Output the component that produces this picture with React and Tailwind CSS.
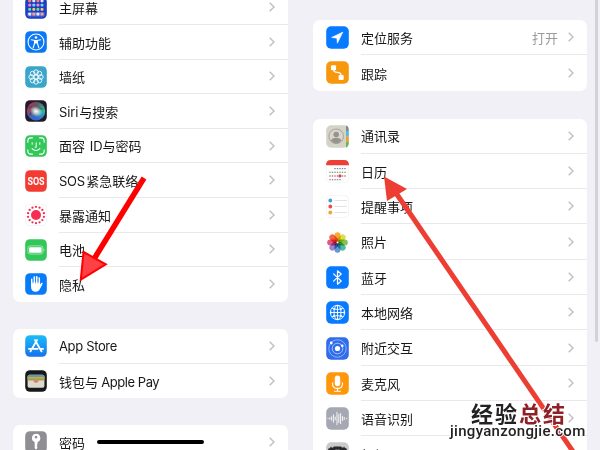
import React from "react";

const Chevron = () => (
  <svg viewBox="0 0 6 10" className="h-[10px] w-[6px] shrink-0" fill="none" stroke="#bfbfc2" strokeWidth="1.4">
    <path d="M.7.7 5 5 .7 9.3" />
  </svg>
);

const Tile = ({ fill, children, stroke }) => (
  <>
    <rect x=".2" y=".2" width="22.6" height="22.6" rx="5" fill={fill} stroke={stroke} strokeWidth=".6" />
    {children}
  </>
);

const range = (n) => Array.from({ length: n }, (_, i) => i);
const polar = (r, deg) => [11.5 + r * Math.cos((deg * Math.PI) / 180), 11.5 + r * Math.sin((deg * Math.PI) / 180)];

const icons = {
  home: (
    <Tile fill="#1d3fc4">
      {range(4).flatMap((r) =>
        range(4).map((c) => (
          <rect key={`${r}${c}`} x={3.4 + c * 4.3} y={2.6 + r * 4.4 + (r === 3 ? 0.6 : 0)} width="3" height="3" rx=".8"
            fill={["#ff7b6b", "#f6c760", "#7ed0f5", "#e8e4ff", "#69df96", "#f588b5"][(r * 5 + c * 3) % 6]} />
        ))
      )}
      <rect x="2.5" y="15.6" width="18" height="4.8" rx="1.5" fill="#fff" opacity=".25" />
    </Tile>
  ),
  access: (
    <Tile fill="#0a78f5">
      <circle cx="11.5" cy="11.5" r="8.3" fill="none" stroke="#fff" strokeWidth="1.1" />
      <circle cx="11.5" cy="6.8" r="1.4" fill="#fff" />
      <path d="M6.7 9.2 10 9.9v3L8.5 17.6M16.3 9.2 13 9.9v3l1.5 4.7" fill="none" stroke="#fff" strokeWidth="1.2" strokeLinecap="round" />
      <path d="M9.8 9.3h3.4v4.3l-1.7-.8-1.7.8z" fill="#fff" />
    </Tile>
  ),
  wallpaper: (
    <Tile fill="#3aa5cb">
      <g fill="none" stroke="#fff" strokeWidth=".9">
        {range(8).map((i) => {
          const [x, y] = polar(5, i * 45);
          return <circle key={i} cx={x} cy={y} r="2.5" />;
        })}
        <circle cx="11.5" cy="11.5" r="2.1" />
      </g>
    </Tile>
  ),
  siri: (
    <>
      <defs>
        <linearGradient id="siri" x1="0" x2="1" y2=".5"><stop stopColor="#d22b68" /><stop offset=".48" stopColor="#66535f" /><stop offset="1" stopColor="#1fc7a4" /></linearGradient>
        <linearGradient id="siriLow" x2="0" y2="1"><stop offset=".5" stopColor="#3178e8" stopOpacity="0" /><stop offset="1" stopColor="#315eea" /></linearGradient>
        <radialGradient id="siriGlow"><stop stopColor="#fff" /><stop offset=".35" stopColor="#fff" stopOpacity=".7" /><stop offset="1" stopColor="#fff" stopOpacity="0" /></radialGradient>
      </defs>
      <Tile fill="#231a29">
        <circle cx="11.5" cy="11.5" r="9.6" fill="url(#siri)" />
        <circle cx="11.5" cy="11.5" r="9.6" fill="url(#siriLow)" />
        <path d="M3 8Q9 3 20 10 10 9 4 17 8 8 3 8" fill="#101820" opacity=".3" />
        <ellipse cx="11.5" cy="11.7" rx="7.2" ry="5.5" fill="url(#siriGlow)" transform="rotate(25 11.5 11.5)" />
      </Tile>
    </>
  ),
  face: (
    <Tile fill="#32c759">
      <g fill="none" stroke="#fff" strokeWidth="1.1" strokeLinecap="round">
        <path d="M3 7.5V6q0-3 3-3h1.8M15.2 3H17q3 0 3 3v1.5M20 15.5V17q0 3-3 3h-1.8M7.8 20H6q-3 0-3-3v-1.5M7.5 8v1.7M15.5 8v1.7M11.7 8v4.2q0 .7-1 .7M7.4 14.3q4.1 3.7 8.2 0" />
      </g>
    </Tile>
  ),
  sos: (
    <Tile fill="#f43b33">
      <text x="11.5" y="15.3" textAnchor="middle" textLength="18" lengthAdjust="spacingAndGlyphs" fill="#fff" fontFamily="Roboto, sans-serif" fontSize="10.5" fontWeight="700">SOS</text>
    </Tile>
  ),
  exposure: (
    <Tile fill="#fff" stroke="#e8e8eb">
      <circle cx="11.5" cy="11.5" r="5.2" fill="#f72e54" />
      {range(14).map((i) => {
        const [x, y] = polar(8.5, (i * 360) / 14 - 90);
        return <circle key={i} cx={x} cy={y} r="1.2" fill="#f72e54" />;
      })}
    </Tile>
  ),
  battery: (
    <Tile fill="#32c759">
      <rect x="3" y="7.2" width="15.7" height="8.5" rx="2.3" fill="none" stroke="#b9efc7" strokeWidth=".8" />
      <rect x="4.3" y="8.5" width="13.1" height="5.9" rx="1" fill="#fff" />
      <path d="M19.6 9.8q1.5 1.7 0 3.4z" fill="#fff" />
    </Tile>
  ),
  hand: (
    <Tile fill="#087bf9">
      <path d="M7.1 12V6.5M9.7 11V4.3M12.3 11V3.9M14.9 11.5V5.3M14.9 15l2.7-4" stroke="#fff" strokeWidth="1.7" strokeLinecap="round" fill="none" />
      <path d="M6.3 9.8h9.4v3.6l1.4-2 .9.6-2.8 5.4q-1.3 2.2-3.8 2.2-5.1 0-5.1-5.6z" fill="#fff" />
      <path d="M8.4 6v5M11 6v5M13.6 6v5" stroke="#087bf9" strokeWidth=".5" />
    </Tile>
  ),
  store: (
    <>
      <defs><linearGradient id="store" x2="0" y2="1"><stop stopColor="#1bbdf8" /><stop offset="1" stopColor="#1671ef" /></linearGradient></defs>
      <Tile fill="url(#store)">
        <path d="M12.6 5.2 7.3 14.4M10.4 5.2l6.9 12M4 14.4h9.3M16 14.4h3M5.7 17.2l.6-1" fill="none" stroke="#fff" strokeWidth="1.8" strokeLinecap="round" />
      </Tile>
    </>
  ),
  wallet: (
    <Tile fill="#161919">
      <rect x="2.7" y="5" width="17.6" height="13.5" rx="1.8" fill="#ded9cf" />
      <path d="M2.7 7q0-2 2-2h13.6q2 0 2 2v.3H2.7z" fill="#609caf" />
      <path d="M2.7 7.3h17.6v2H2.7z" fill="#dba43c" />
      <path d="M2.7 9h17.6v2H2.7z" fill="#98a352" />
      <path d="M8.4 11h6.2q-1 2.4-3.1 2.4T8.4 11" fill="#e6705c" />
    </Tile>
  ),
  key: (
    <Tile fill="#8e8e93">
      <path fillRule="evenodd" d="M11.5 3a4.4 4.4 0 0 1 1.7 8.5v2l-1 1 1 1-1 1 1 1-1.7 2-1.4-1.7v-6.3A4.4 4.4 0 0 1 11.5 3m0 2a1.4 1.4 0 1 0 .01 0" fill="#fff" />
    </Tile>
  ),
  location: <Tile fill="#087aff"><path d="M16.9 6.1 5.6 11.4l5.3.8.5 5z" fill="#fff" stroke="#fff" strokeWidth=".6" strokeLinejoin="round" /></Tile>,
  track: (
    <Tile fill="#f7970b">
      <rect x="5" y="4.2" width="5.1" height="5.1" rx="1" fill="#fff" />
      <rect x="12.6" y="14" width="5.1" height="5.1" rx="1" fill="#fff" />
      <path d="M7.6 8.5q0 2.7 3.7 2.9t3.9 3" fill="none" stroke="#fff" strokeWidth="1.2" />
    </Tile>
  ),
  contacts: (
    <Tile fill="#d5d2c7">
      <path d="M20 .4q2.7.5 2.7 4V6H20z" fill="#898985" />
      <path d="M20 6h2.8v5.5H20z" fill="#56bae8" />
      <path d="M20 11.5h2.8V17H20z" fill="#f0a032" />
      <path d="M20 17h2.8q.2 4.5-2.8 5.7z" fill="#61bd59" />
      <circle cx="10.2" cy="11.3" r="7.3" fill="#d9d6cc" stroke="#97958e" strokeWidth=".8" />
      <circle cx="10.2" cy="9.5" r="2.8" fill="#96948e" />
      <path d="M4.9 15.6q1.3-2.8 5.3-2.8t5.3 2.8q-5.3 5.4-10.6 0" fill="#96948e" />
    </Tile>
  ),
  calendar: (
    <Tile fill="#fff" stroke="#ececef">
      <path d="M0 5.2Q0 0 5 0h13q5 0 5 5.2z" fill="#ee3e38" />
      {range(4).flatMap((r) => range(7).map((c) => (r === 0 && c < 2) || (r === 3 && c > 4) ? null : (
        <rect key={`${r}${c}`} x={3.3 + c * 2.5} y={8 + r * 3.7} width="1.4" height="1.2" fill={r === 2 ? "#c94e58" : r === 1 ? "#6b9c70" : "#7d8395"} />
      )))}
      <circle cx="13.9" cy="15.9" r="1.6" fill="#e34255" />
    </Tile>
  ),
  reminders: (
    <Tile fill="#fff" stroke="#e9e9ec">
      <circle cx="4.3" cy="5.5" r="1.9" fill="#409fce" /><circle cx="4.3" cy="11.5" r="1.9" fill="#e84d4d" /><circle cx="4.3" cy="17.5" r="1.9" fill="#eba63a" />
      <path d="M8.5 5.5H21M8.5 11.5H21M8.5 17.5H21" stroke="#d7d7da" strokeWidth=".7" />
    </Tile>
  ),
  photos: (
    <g>
      {["#f8a51c", "#dadd36", "#78be4a", "#42b39b", "#4b93d5", "#9a78c2", "#df477d", "#f05b37"].map((color, i) => (
        <rect key={color} x="8.5" y="1.2" width="6" height="9.8" rx="3" fill={color} className="mix-blend-multiply" opacity=".92" transform={`rotate(${i * 45} 11.5 11.5)`} />
      ))}
      <circle cx="11.5" cy="11.5" r="1" fill="#fff" opacity=".8" />
    </g>
  ),
  bluetooth: <Tile fill="#087aff"><path d="m7.6 7.9 7.6 7.1-3.7 3.2V4.8l3.7 3.2-7.6 7.1" fill="none" stroke="#fff" strokeWidth="1.2" strokeLinejoin="round" strokeLinecap="round" /></Tile>,
  globe: (
    <Tile fill="#087aff">
      <g fill="none" stroke="#fff" strokeWidth=".9">
        <circle cx="11.5" cy="11.5" r="7.2" />
        <ellipse cx="11.5" cy="11.5" rx="3.5" ry="7.2" />
        <path d="M11.5 4.3v14.4M4.3 11.5h14.4M5.8 7.2q5.7 2.7 11.4 0M5.8 15.8q5.7-2.7 11.4 0" />
      </g>
      {[[8.3, 8.2], [14.8, 8.2], [11.5, 11.5], [8.1, 14.8], [14.9, 14.8], [5, 11.5], [18, 11.5]].map(([x, y]) => <circle key={`${x}${y}`} cx={x} cy={y} r="1" fill="#fff" />)}
    </Tile>
  ),
  nearby: (
    <Tile fill="#306dec">
      <circle cx="11.5" cy="11.5" r="2.6" fill="#fff" />
      <circle cx="11.5" cy="11.5" r="5.3" fill="none" stroke="#c5d8ff" strokeWidth=".8" />
      <circle cx="11.5" cy="11.5" r="8.7" fill="none" stroke="#a6c3ff" strokeWidth=".8" />
      <circle cx="5.2" cy="6" r="1.4" fill="#fff" /><circle cx="16.2" cy="8.7" r="1.3" fill="#fff" />
    </Tile>
  ),
  mic: (
    <Tile fill="#ff970b">
      <rect x="8.8" y="3.5" width="5.4" height="10.8" rx="2.7" fill="#fff" />
      <path d="M6.6 10.8v1.4q0 4.2 4.9 4.2t4.9-4.2v-1.4M11.5 16.4v2.9M8.5 19.3h6" fill="none" stroke="#fff" strokeWidth="1.1" strokeLinecap="round" />
    </Tile>
  ),
  speech: (
    <Tile fill="#a5a7b2">
      <path d="M2 11.5h.1M3.8 10.7v1.6M5.6 9.8v3.4M7.4 7.8v7.4M9.2 10v3M11 5.3v12.4M12.8 7.5v8M14.6 6.4v10.2M16.4 9.3v4.4M18.2 10.4v2.2M20.6 11.5h.2" stroke="#fff" strokeWidth=".9" strokeLinecap="round" />
    </Tile>
  ),
  camera: (
    <Tile fill="#cacacd">
      <path d="M2 8q0-2 2-2h2.5L8 4.6h7L16.5 6H19q2 0 2 2v10H2z" fill="#29292b" />
      <circle cx="11.5" cy="12" r="4.6" fill="#141416" stroke="#69696c" />
      <path d="M4 5.4h2.5M16.5 5.4H19" stroke="#4d4d50" />
    </Tile>
  ),
};

const AppIcon = ({ name, className }) => (
  <svg viewBox="0 0 23 23" className={`shrink-0 ${className}`}>{icons[name]}</svg>
);

function Group({ items, right, className = "" }) {
  return (
    <div className={`overflow-hidden rounded-[7px] bg-white ${right ? "w-[274px]" : "w-[275px]"} ${className}`}>
      {items.map(([icon, label, value], i) => (
        <div key={icon} className={`flex items-center ${right ? "h-[35.3px] pl-[13px]" : "h-[34.6px] pl-3"}`}>
          <AppIcon name={icon} className={right ? "size-[23px]" : "size-[22px]"} />
          <div className={`ml-3 flex h-full flex-1 items-center pr-[13px] ${i < items.length - 1 ? "border-b border-[#e9e9eb]" : ""}`}>
            <span className="flex-1 whitespace-nowrap pt-[1.5px]">{label}</span>
            {value && <span className="mr-[10px] pt-[1.5px] text-[#9a9a9d]">{value}</span>}
            <Chevron />
          </div>
        </div>
      ))}
    </div>
  );
}

export default function App() {
  return (
    <main className="relative flex h-[450px] w-[600px] overflow-hidden bg-[#f1f0f6] font-[Inter,'Noto_Sans_CJK_SC',sans-serif] text-[13px] leading-[18px] text-[#171717]">
      <section className="h-full w-[300px] shrink-0 overflow-hidden pl-[13px]">
        <Group className="-mt-[9.6px]" items={[
          ["home", "主屏幕"], ["access", "辅助功能"], ["wallpaper", "墙纸"],
          ["siri", <><span className="mr-px tracking-[-0.1px]">Siri</span>与搜索</>],
          ["face", <>面容<span className="mx-[1px]"> ID</span><span className="-ml-px">与密码</span></>],
          ["sos", <><span className="mr-[1.5px] tracking-[-0.3px]">SOS</span>紧急联络</>],
          ["exposure", "暴露通知"], ["battery", "电池"], ["hand", "隐私"],
        ]} />
        <Group className="mt-[27.2px]" items={[
          ["store", <span className="tracking-[-0.35px]">App Store</span>],
          ["wallet", <>钱包与<span className="tracking-[-0.45px]"> Apple Pay</span></>],
        ]} />
        <Group className="mt-[26.6px]" items={[["key", "密码"]]} />
      </section>
      <section className="h-full w-[295px] shrink-0 overflow-hidden pl-[13px] pt-5">
        <Group right items={[["location", "定位服务", "打开"], ["track", "跟踪"]]} />
        <Group right className="mt-[28px]" items={[
          ["contacts", "通讯录"], ["calendar", "日历"], ["reminders", "提醒事项"], ["photos", "照片"], ["bluetooth", "蓝牙"],
          ["globe", "本地网络"], ["nearby", "附近交互"], ["mic", "麦克风"], ["speech", "语音识别"], ["camera", "相机"],
        ]} />
      </section>
      <div className="h-[342px] w-[3px] rounded-b-full bg-[#d3d2d8]" />

      <div className="absolute left-[97px] top-[439.5px] h-[4px] w-[107px] rounded-full bg-black" />
      <svg className="absolute inset-0 h-[450px] w-[600px]" viewBox="0 0 600 450">
        <path d="M144 178 94 259" stroke="#fe0000" strokeWidth="5.5" />
        <path d="m83.5 252 22.3 12.3-25 15.2z" fill="#ff4044" stroke="#fe0000" strokeWidth="2" />
        <path d="m396 193 178 260" stroke="#ed3e33" strokeWidth="5" />
        <path d="m384 176.5 23 12.5-20 12z" fill="#ed3e33" />
      </svg>
      <div className="absolute left-[471px] top-[401px] flex h-[22px] items-center gap-[2px] font-['Noto_Sans_CJK_SC',sans-serif] text-[22px] font-bold leading-[22px] text-[#242122] [-webkit-text-stroke:2px_white] [paint-order:stroke_fill]">
        <span>经</span><span>验</span><span className="text-[#8e2027]">总</span><span className="text-[#8e2027]">结</span>
      </div>
      <div className="absolute left-[450px] top-[424px] h-[15px] whitespace-nowrap font-[Roboto,sans-serif] text-[15px] font-medium leading-[15px] tracking-[0.3px] text-[#242122] [-webkit-text-stroke:2px_white] [paint-order:stroke_fill]">
        jingyanzongjie.com
      </div>
    </main>
  );
}
